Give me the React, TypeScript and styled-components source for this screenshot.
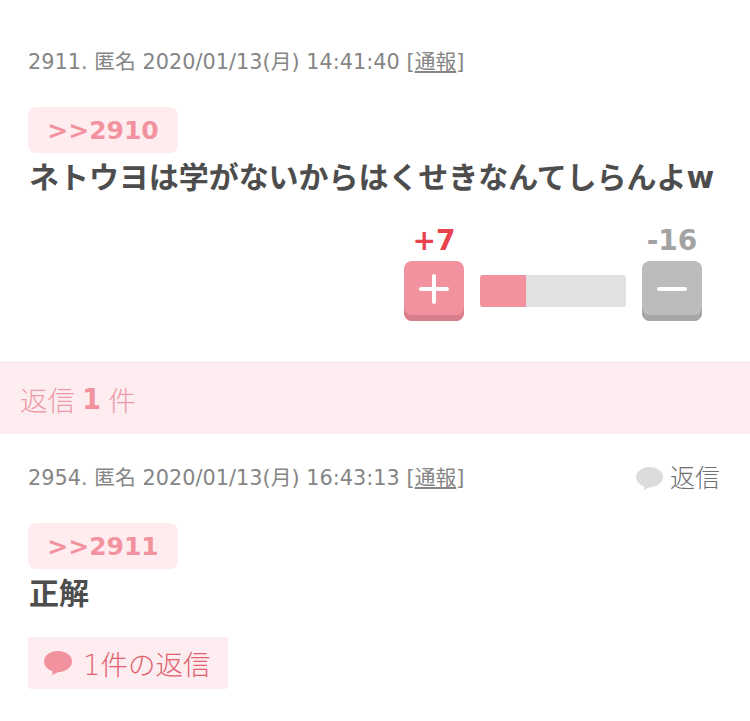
import React from "react";
import styled, { createGlobalStyle } from "styled-components";

const Global = createGlobalStyle`
  html, body { margin: 0; padding: 0; background: #fff; }
  body { font-family: "DejaVu Sans", "Noto Sans CJK JP", sans-serif; }
`;

const Page = styled.div`
  width: 750px;
  height: 721px;
  overflow: hidden;
  display: flex;
  flex-direction: column;
`;

const FirstPost = styled.section`
  padding: 46px 28px 0;
  display: flex;
  flex-direction: column;
  align-items: flex-start;
`;

const ReplyPost = styled.section`
  padding: 28px 28px 0;
  display: flex;
  flex-direction: column;
  align-items: flex-start;
`;

const MetaRow = styled.div`
  display: flex;
  align-self: stretch;
  justify-content: space-between;
  align-items: center;
  height: 32px;
  flex-shrink: 0;
`;

const Meta = styled.div`
  font-size: 20.8px;
  letter-spacing: 0.02px;
  line-height: 28px;
  color: #858585;
  white-space: nowrap;
  a { color: inherit; text-decoration: underline; }
`;

const Anchor = styled.div`
  margin-top: 29px;
  width: 150px;
  height: 46px;
  flex-shrink: 0;
  border-radius: 8px;
  background: #feecef;
  color: #f3929f;
  font-size: 25px;
  font-weight: 700;
  display: flex;
  align-items: center;
  justify-content: center;
  line-height: 1;
`;

const Body = styled.p`
  margin: 4px 0 0 1px;
  font-size: 30px;
  line-height: 42px;
  font-weight: 700;
  letter-spacing: -0.05px;
  color: #4d4d4d;
  white-space: nowrap;
`;

const Votes = styled.div`
  align-self: flex-end;
  margin: 27px 20px 0 0;
  display: flex;
  align-items: flex-end;
  gap: 16px;
`;

const VoteColumn = styled.div`
  width: 60px;
  display: flex;
  flex-direction: column;
  align-items: center;
`;

const Count = styled.div<{ $color: string }>`
  font-size: 28px;
  line-height: 30px;
  margin-bottom: 5px;
  font-weight: 700;
  color: ${(p) => p.$color};
  white-space: nowrap;
`;

const VoteButton = styled.div<{ $bg: string; $edge: string }>`
  width: 60px;
  height: 60px;
  box-sizing: border-box;
  padding-bottom: 5px;
  border-radius: 8px;
  background: ${(p) => p.$bg};
  box-shadow: inset 0 -6px 0 ${(p) => p.$edge};
  display: flex;
  align-items: center;
  justify-content: center;
`;

const Bar = styled.div`
  width: 146px;
  height: 32px;
  margin-bottom: 14px;
  border-radius: 3px;
  background: #e1e1e1;
  overflow: hidden;
`;

const BarFill = styled.div`
  height: 100%;
  background: #f2929e;
`;

const ReplyBand = styled.div`
  height: 72px;
  box-sizing: border-box;
  flex-shrink: 0;
  margin-top: 41px;
  padding-left: 20px;
  background: #fdedf0;
  border-top: 1px solid #f6e1e5;
  display: flex;
  align-items: center;
  gap: 7px;
  font-size: 27.5px;
  font-weight: 300;
  font-family: "Noto Sans CJK JP", sans-serif;
  color: #ec9aa7;
  b { color: #f2929e; font-weight: 700; font-family: "DejaVu Sans", sans-serif; }
`;

const ReplyLink = styled.div`
  display: flex;
  align-items: center;
  gap: 7px;
  line-height: 1;
  margin-right: 2px;
  font-size: 25px;
  font-weight: 300;
  color: #707070;
`;

const ThreadButton = styled.div`
  margin-top: 22px;
  width: 200px;
  height: 52px;
  border-radius: 3px;
  background: #fdedf0;
  display: flex;
  align-items: center;
  padding-left: 16px;
  box-sizing: border-box;
  gap: 11px;
  font-size: 27.5px;
  font-weight: 300;
  color: #e0626f;
  white-space: nowrap;
`;

const Bubble = ({ color, w, h }: { color: string; w: number; h: number }) => (
  <svg width={w} height={h} viewBox="0 0 28 24">
    <ellipse cx="14" cy="10.5" rx="14" ry="10.5" fill={color} />
    <path d="M9 18 L8 24 L19 19 Z" fill={color} />
  </svg>
);

const App = () => (
  <Page>
    <Global />
    <FirstPost>
      <MetaRow>
        <Meta>2911. 匿名 2020/01/13(月) 14:41:40 [<a>通報</a>]</Meta>
      </MetaRow>
      <Anchor>&gt;&gt;2910</Anchor>
      <Body>ネトウヨは学がないからはくせきなんてしらんよw</Body>
      <Votes>
        <VoteColumn>
          <Count $color="#e8424f">+7</Count>
          <VoteButton $bg="#f2929e" $edge="#d97f8b">
            <svg width="30" height="30" viewBox="0 0 30 30">
              <path d="M15 2V28M2 15H28" stroke="#fff" strokeWidth="4" strokeLinecap="round" />
            </svg>
          </VoteButton>
        </VoteColumn>
        <Bar>
          <BarFill style={{ width: `${(46 / 146) * 100}%` }} />
        </Bar>
        <VoteColumn>
          <Count $color="#a3a3a3">-16</Count>
          <VoteButton $bg="#bcbcbc" $edge="#a6a6a6">
            <svg width="30" height="30" viewBox="0 0 30 30">
              <path d="M2 15H28" stroke="#fff" strokeWidth="4" strokeLinecap="round" />
            </svg>
          </VoteButton>
        </VoteColumn>
      </Votes>
    </FirstPost>
    <ReplyBand>
      返信 <b>1</b> 件
    </ReplyBand>
    <ReplyPost>
      <MetaRow>
        <Meta>2954. 匿名 2020/01/13(月) 16:43:13 [<a>通報</a>]</Meta>
        <ReplyLink>
          <Bubble color="#dcdcdc" w={27} h={23} />
          返信
        </ReplyLink>
      </MetaRow>
      <Anchor>&gt;&gt;2911</Anchor>
      <Body>正解</Body>
      <ThreadButton>
        <Bubble color="#f2929e" w={28} h={24} />
        1件の返信
      </ThreadButton>
    </ReplyPost>
  </Page>
);

export default App;
